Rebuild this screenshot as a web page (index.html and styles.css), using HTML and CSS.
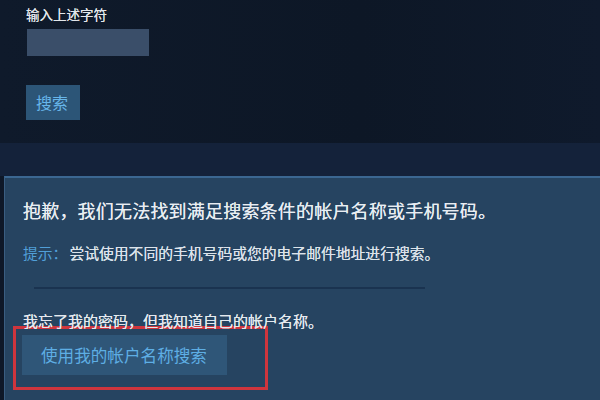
FILE: index.html
```html
<!DOCTYPE html>
<html lang="zh-CN">
<head>
<meta charset="utf-8">
<title>找回帐户</title>
<link rel="stylesheet" href="styles.css">
</head>
<body>
<div class="top">
  <div class="label">输入上述字符</div>
  <div class="input"></div>
  <div class="btn-small">搜索</div>
</div>
<div class="band"></div>
<div class="panel">
  <div class="heading">抱歉，我们无法找到满足搜索条件的帐户名称或手机号码。</div>
  <div class="tip"><span class="tip-label">提示：</span><span class="tip-text">尝试使用不同的手机号码或您的电子邮件地址进行搜索。</span></div>
  <div class="sep"></div>
  <div class="forgot">我忘了我的密码，但我知道自己的帐户名称。</div>
  <div class="highlight">
    <div class="btn-big">使用我的帐户名称搜索</div>
  </div>
</div>
</body>
</html>
```
FILE: styles.css
```css
html, body {
  margin: 0;
  padding: 0;
}
body {
  width: 600px;
  height: 400px;
  overflow: hidden;
  background: #0e1828;
  font-family: "Noto Sans CJK SC", "Noto Sans", sans-serif;
}
.top {
  height: 143px;
  padding: 6px 0 0 26px;
  box-sizing: border-box;
  background: linear-gradient(90deg, #0f1a2b 0%, #0d1726 60%, #0f1a2c 100%);
}
.label {
  font-size: 13.5px;
  line-height: 16px;
  color: #e2e6ea;
  height: 23px;
  text-shadow: 0 0 0.5px #e2e6ea;
}
.input {
  margin-left: 1px;
  width: 122px;
  height: 27px;
  background: #3a4e69;
}
.btn-small {
  margin-top: 29px;
  width: 54px;
  height: 35px;
  background: #2c5577;
  color: #67b6ea;
  font-size: 16px;
  line-height: 35px;
  text-align: center;
  box-sizing: border-box;
  padding-right: 2px;
}
.band {
  height: 33px;
  background: #14223a;
}
.panel {
  height: 224px;
  margin-left: 4px;
  background: #264461;
  border-top: 2px solid #3b6791;
  border-left: 1px solid #3a5e82;
  padding: 20px 0 0 18px;
  box-sizing: border-box;
}
.heading {
  font-size: 18px;
  line-height: 24px;
  letter-spacing: 0.2px;
  color: #e8edf2;
  height: 45px;
  text-shadow: 0 0 0.6px #e8edf2;
}
.tip {
  font-size: 14.8px;
  line-height: 20px;
  height: 44px;
}
.tip-label {
  color: #519fd8;
  margin-right: 2px;
}
.tip-text {
  color: #dce3ea;
  text-shadow: 0 0 0.5px #dce3ea;
}
.sep {
  margin-left: 11px;
  width: 391px;
  height: 2px;
  background: #1a3350;
}
.forgot {
  margin-top: 22px;
  font-size: 15px;
  line-height: 20px;
  color: #e4e9ee;
  height: 15px;
  text-shadow: 0 0 0.5px #e4e9ee;
}
.highlight {
  margin-left: -10px;
  width: 255px;
  height: 64px;
  border: 3px solid #cf353d;
  box-sizing: border-box;
  padding: 6px 0 0 6px;
}
.btn-big {
  width: 205px;
  height: 40px;
  background: #2f5678;
  color: #5eaee4;
  font-size: 16.6px;
  line-height: 40px;
  padding-left: 19px;
  box-sizing: border-box;
}
```
